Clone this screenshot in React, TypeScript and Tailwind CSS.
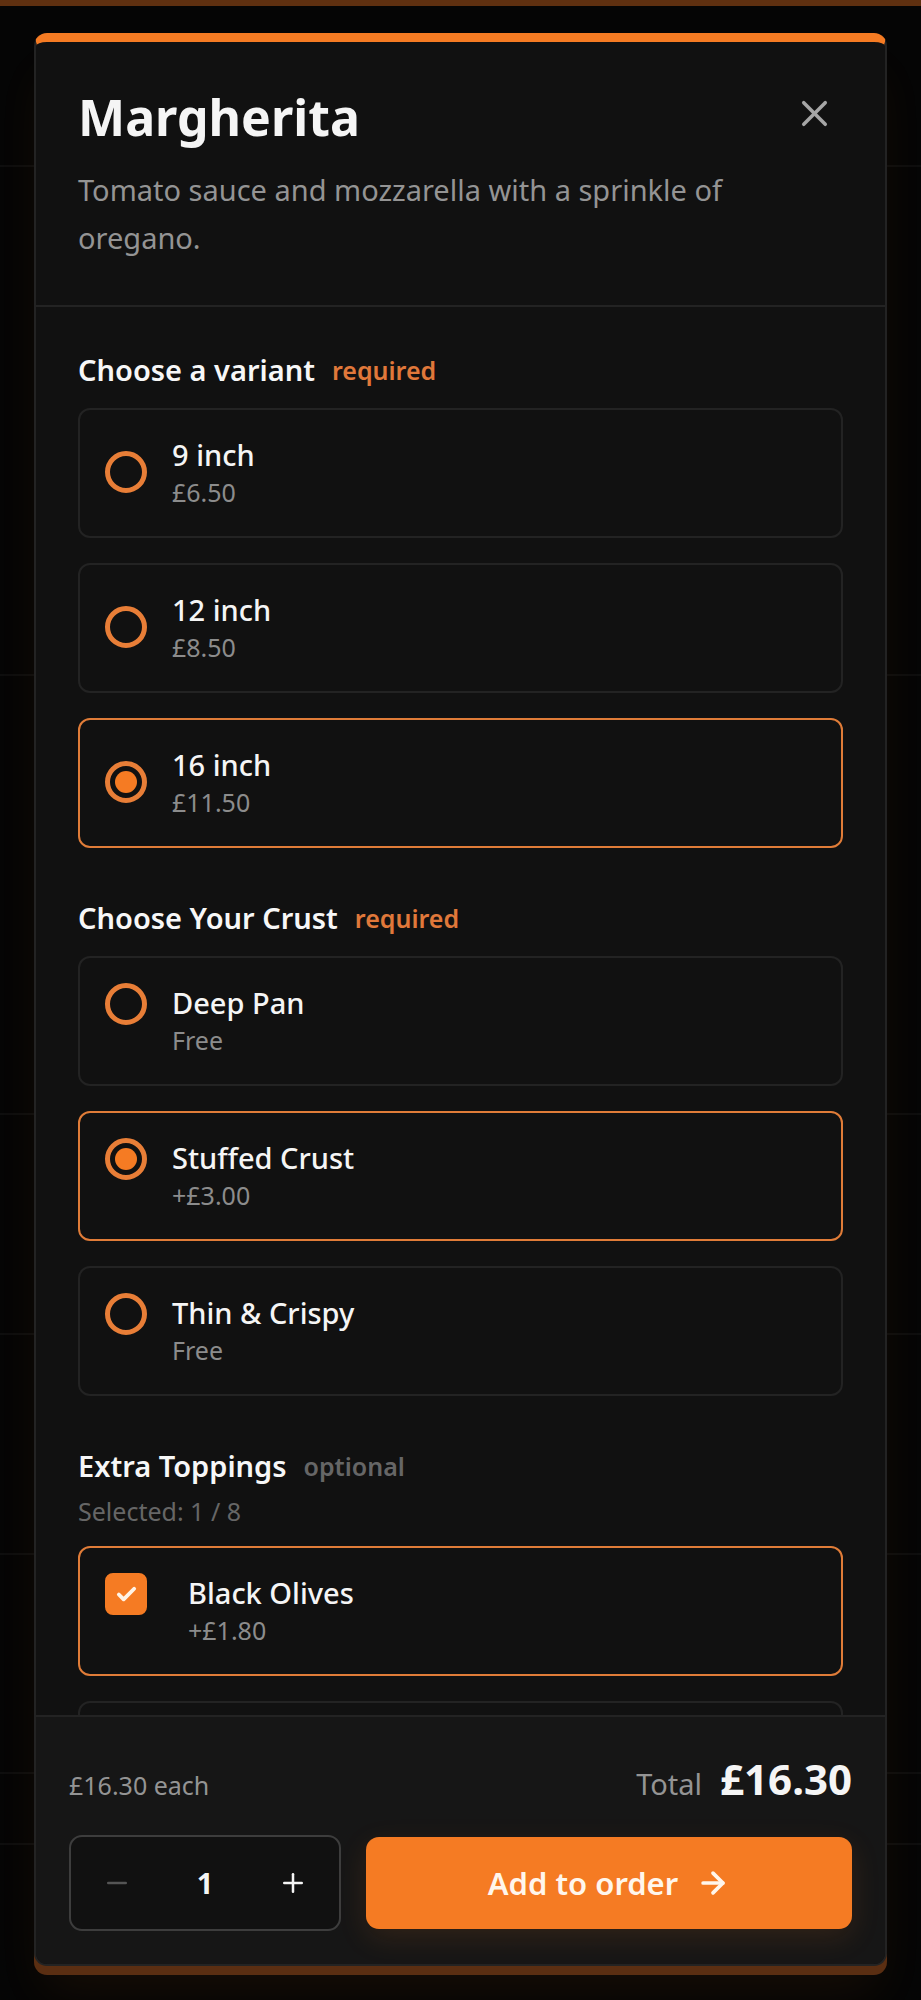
import React, { useState } from "react";
import { ArrowRight, Check, Minus, Plus, X } from "lucide-react";

type Option = { id: string; name: string; price: string };

const variants: Option[] = [
  { id: "v9", name: "9 inch", price: "£6.50" },
  { id: "v12", name: "12 inch", price: "£8.50" },
  { id: "v16", name: "16 inch", price: "£11.50" },
];

const crusts: Option[] = [
  { id: "deep", name: "Deep Pan", price: "Free" },
  { id: "stuffed", name: "Stuffed Crust", price: "+£3.00" },
  { id: "thin", name: "Thin & Crispy", price: "Free" },
];

function OptionText({ name, price }: { name: string; price: string }) {
  return (
    <span className="flex flex-col">
      <span className="text-[29px] leading-10 font-medium text-[#f5f5f5]">{name}</span>
      <span className="text-[25px] leading-[34px] text-[#8c8c8c]">{price}</span>
    </span>
  );
}

function optionBox(selected: boolean) {
  return selected
    ? "flex cursor-pointer gap-[25px] rounded-xl border-2 border-[#e07c38] px-[25px] pt-[25px] pb-[27px]"
    : "flex cursor-pointer gap-[25px] rounded-xl border-2 border-[#232323] px-[25px] pt-[25px] pb-[27px]";
}

function RadioList(props: {
  group: string;
  options: Option[];
  value: string;
  onChange: (id: string) => void;
  centered?: boolean;
}) {
  return (
    <div className="mt-[18px] flex flex-col gap-[25px]">
      {props.options.map((o) => (
        <label
          key={o.id}
          className={`${optionBox(props.value === o.id)} ${props.centered ? "items-center" : "items-start"}`}
        >
          <span className="grid size-[42px] shrink-0 place-items-center">
            <input
              type="radio"
              name={props.group}
              checked={props.value === o.id}
              onChange={() => props.onChange(o.id)}
              className="peer col-start-1 row-start-1 size-[42px] appearance-none rounded-full border-5 border-[#e87e37]"
            />
            <span className="pointer-events-none col-start-1 row-start-1 hidden size-[22px] rounded-full bg-[#f57b23] peer-checked:block" />
          </span>
          <OptionText name={o.name} price={o.price} />
        </label>
      ))}
    </div>
  );
}

function SectionTitle({ title, required }: { title: string; required?: boolean }) {
  return (
    <div className="flex items-center gap-[17px]">
      <h3 className="text-[29px] leading-10 font-semibold text-[#f7f7f7]">{title}</h3>
      {required ? (
        <span className="text-[25px] leading-[34px] font-semibold text-[#e0783a]">required</span>
      ) : (
        <span className="text-[25px] leading-[34px] font-semibold text-[#666666]">optional</span>
      )}
    </div>
  );
}

function Backdrop() {
  return (
    <div aria-hidden="true" className="absolute inset-0 flex flex-col border-t-[6px] border-[#5f3010]">
      <div className="h-[161px] border-b-2 border-[#0e0e0e]" />
      <div className="h-[509px] border-b-2 border-[#0e0e0e]" />
      <div className="h-[439px] border-b-2 border-[#0e0e0e]" />
      <div className="h-[220px] border-b-2 border-[#0e0e0e]" />
      <div className="h-[220px] border-b-2 border-[#0e0e0e]" />
      <div className="h-[219px] border-b-2 border-[#0e0e0e]" />
      <div className="h-[71px] border-b-2 border-[#0e0e0e]" />
    </div>
  );
}

export default function App() {
  const [variant, setVariant] = useState("v16");
  const [crust, setCrust] = useState("stuffed");
  const [olives, setOlives] = useState(true);
  const [qty, setQty] = useState(1);

  return (
    <div className="relative flex h-screen flex-col overflow-hidden bg-[#050505] px-[34px] pt-[33px] pb-[34px] font-['Noto_Sans',sans-serif]">
      <Backdrop />
      <div
        role="dialog"
        aria-modal="true"
        aria-labelledby="item-title"
        className="relative flex min-h-0 flex-1 flex-col rounded-[13px] border-2 border-t-[9px] border-[#232323] border-t-[#f57b23] bg-[#111111] shadow-[0_9px_0_#5a2e12,0_34px_50px_-10px_rgba(246,124,37,0.08)]"
      >
        <header className="flex items-start justify-between gap-4 border-b-2 border-[#232323] px-[42px] py-[43px]">
          <div>
            <h2 id="item-title" className="text-[50px] leading-[64px] font-bold text-[#f5f5f5]">
              Margherita
            </h2>
            <p className="mt-[17px] text-[29px] leading-[48px] text-[#949494]">
              Tomato sauce and mozzarella with a sprinkle of oregano.
            </p>
          </div>
          <button
            type="button"
            aria-label="Close"
            className="flex h-14 w-[58px] shrink-0 items-center justify-center text-[#a6a6a6]"
          >
            <X size={43} strokeWidth={2} />
          </button>
        </header>

        <div className="min-h-0 flex-1 overflow-y-auto px-[42px] pt-[43px] [scrollbar-width:none]">
          <section>
            <SectionTitle title="Choose a variant" required />
            <RadioList group="variant" options={variants} value={variant} onChange={setVariant} centered />
          </section>

          <section className="mt-[50px]">
            <SectionTitle title="Choose Your Crust" required />
            <RadioList group="crust" options={crusts} value={crust} onChange={setCrust} />
          </section>

          <section className="mt-[50px]">
            <SectionTitle title="Extra Toppings" />
            <p className="mt-[7px] text-[25px] leading-9 text-[#666666]">Selected: {olives ? 1 : 0} / 8</p>
            <div className="mt-[17px] flex flex-col gap-[25px]">
              <label className={`${optionBox(olives)} items-start`}>
                <span className="mr-4 grid size-[42px] shrink-0 place-items-center">
                  <input
                    type="checkbox"
                    checked={olives}
                    onChange={(e) => setOlives(e.target.checked)}
                    className="peer col-start-1 row-start-1 size-[42px] appearance-none rounded-lg border-4 border-[#f57b23] checked:bg-[#f57b23]"
                  />
                  <Check
                    size={23}
                    strokeWidth={4}
                    className="pointer-events-none col-start-1 row-start-1 hidden text-[#fff3e6] peer-checked:block"
                  />
                </span>
                <OptionText name="Black Olives" price="+£1.80" />
              </label>
              <div className="h-[130px] rounded-xl border-2 border-[#232323]" />
            </div>
          </section>
        </div>

        <footer className="rounded-b-[11px] border-t-2 border-[#232323] bg-[#161616] px-[33px] pt-[30px] pb-[33px]">
          <div className="flex items-baseline justify-between">
            <span className="text-[25px] leading-9 text-[#949494]">£16.30 each</span>
            <span className="flex items-baseline gap-[18px]">
              <span className="text-[29px] leading-10 text-[#949494]">Total</span>
              <span className="text-[42px] leading-[64px] font-bold text-[#f5f5f5]">£16.30</span>
            </span>
          </div>
          <div className="mt-6 flex items-center gap-[25px]">
            <div className="flex h-24 w-[272px] shrink-0 items-center justify-between rounded-[13px] border-2 border-[#3d3d3d] bg-[#111111]">
              <button
                type="button"
                aria-label="Decrease quantity"
                disabled={qty === 1}
                onClick={() => setQty(qty - 1)}
                className="flex h-full w-[92px] items-center justify-center text-[#f5f5f5] disabled:text-[#555555]"
              >
                <Minus size={30} strokeWidth={2} />
              </button>
              <span className="text-[29px] leading-10 font-bold text-[#f5f5f5]">{qty}</span>
              <button
                type="button"
                aria-label="Increase quantity"
                onClick={() => setQty(qty + 1)}
                className="flex h-full w-[92px] items-center justify-center text-[#f5f5f5]"
              >
                <Plus size={30} strokeWidth={2} />
              </button>
            </div>
            <button
              type="button"
              className="flex h-[92px] flex-1 items-center justify-center gap-[18px] rounded-[13px] bg-[#f57b23] text-[31px] leading-10 font-semibold text-[#fff6ec] shadow-[0_9px_30px_rgba(246,124,37,0.12)]"
            >
              Add to order
              <ArrowRight size={34} strokeWidth={2.6} />
            </button>
          </div>
        </footer>
      </div>
    </div>
  );
}
